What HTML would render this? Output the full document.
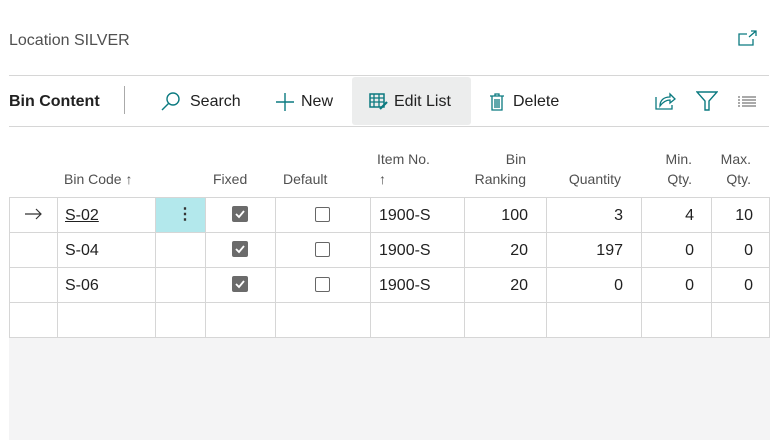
<!DOCTYPE html>
<html><head><style>
*{margin:0;padding:0;box-sizing:border-box}
body{width:780px;height:440px;background:#fff;font-family:"Liberation Sans",sans-serif;color:#212121;position:relative;overflow:hidden}
.a{position:absolute;white-space:nowrap}
.hl{position:absolute;height:1px;background:#d6d6d6}
.vl{position:absolute;width:1px;background:#d6d6d6}
.h{color:#505050;font-size:14px}
.c{font-size:16px}
.cb{position:absolute;width:15px;height:15px;border-radius:2px}
</style></head><body>
<div class="a" style="left:9px;top:32px;font-size:16px;color:#505050">Location SILVER</div>
<svg class="a" style="left:738px;top:30px" width="20" height="17" viewBox="0 0 20 17" fill="none" stroke="#0b7a80" stroke-width="1.3"><path d="M9 4H1v11h14V9"/><path d="M11 7l7-6M13 1h5v5"/></svg>
<div class="hl" style="left:9px;top:75px;width:760px"></div>
<div class="a" style="left:9px;top:93px;font-size:16px;font-weight:bold">Bin Content</div>
<div class="vl" style="left:124px;top:86px;height:28px;background:#aaa"></div>
<svg class="a" style="left:160px;top:91px" width="22" height="20" viewBox="0 0 22 20" fill="none" stroke="#0b7a80" stroke-width="1.4"><circle cx="13" cy="8" r="6"/><path d="M9 12L2 19"/></svg>
<div class="a" style="left:190px;top:93px;font-size:16px">Search</div>
<svg class="a" style="left:275px;top:92px" width="20" height="20" viewBox="0 0 20 20" stroke="#0b7a80" stroke-width="1.4"><path d="M10 1v18M1 10h18"/></svg>
<div class="a" style="left:301px;top:93px;font-size:16px">New</div>
<div class="a" style="left:352px;top:77px;width:119px;height:48px;background:#eceded;border-radius:3px"></div>
<svg class="a" style="left:369px;top:93px" width="20" height="18" viewBox="0 0 20 18"><rect x="1" y="1" width="14" height="13" fill="none" stroke="#0b7a80" stroke-width="1.5"/><path d="M1 5h14M1 9h14M5 1v13M10 1v13" stroke="#0b7a80" stroke-width="1.3"/><path d="M11 16l7-7" stroke="#0b7a80" stroke-width="2.2"/></svg>
<div class="a" style="left:394px;top:93px;font-size:16px">Edit List</div>
<svg class="a" style="left:489px;top:92px" width="16" height="20" viewBox="0 0 16 20" fill="none" stroke="#0b7a80" stroke-width="1.3"><path d="M1 4h14M6 4V2h4v2M3 4v14h10V4M6 7v9M8 7v9M10 7v9"/></svg>
<div class="a" style="left:513px;top:93px;font-size:16px">Delete</div>
<svg class="a" style="left:655px;top:91px" width="22" height="20" viewBox="0 0 22 20" fill="none" stroke="#0b7a80" stroke-width="1.3"><path d="M1 6v12h16v-4"/><path d="M5 15c0-6 4-9 10-9V3l5 5-5 4V9c-4 0-7 2-10 6z"/></svg>
<svg class="a" style="left:696px;top:91px" width="22" height="20" viewBox="0 0 22 20" fill="none" stroke="#0b7a80" stroke-width="1.4"><path d="M1 1h20l-8 9v9h-4v-9z"/></svg>
<svg class="a" style="left:738px;top:96px" width="18" height="12" viewBox="0 0 18 12" stroke="#555" stroke-width="1"><path d="M0 1h2M4 1h14M0 4h2M4 4h14M0 7h2M4 7h14M0 10h2M4 10h14"/></svg>
<div class="hl" style="left:9px;top:126px;width:760px"></div>

<div class="a h" style="left:64px;top:171px">Bin Code ↑</div>
<div class="a h" style="left:213px;top:171px">Fixed</div>
<div class="a h" style="left:283px;top:171px">Default</div>
<div class="a h" style="left:377px;top:151px">Item No.</div>
<div class="a h" style="left:379px;top:171px">↑</div>
<div class="a h" style="left:464px;top:151px;width:62px;text-align:right">Bin</div>
<div class="a h" style="left:464px;top:171px;width:62px;text-align:right">Ranking</div>
<div class="a h" style="left:546px;top:171px;width:75px;text-align:right">Quantity</div>
<div class="a h" style="left:641px;top:151px;width:51px;text-align:right">Min.</div>
<div class="a h" style="left:641px;top:171px;width:51px;text-align:right">Qty.</div>
<div class="a h" style="left:711px;top:151px;width:40px;text-align:right">Max.</div>
<div class="a h" style="left:711px;top:171px;width:40px;text-align:right">Qty.</div>

<div class="a" style="left:9px;top:337px;width:761px;height:103px;background:#f4f4f5"></div>
<div class="a" style="left:156px;top:198px;width:49px;height:34px;background:#b3e8ec"></div>
<div class="a" style="left:177px;top:204px;font-size:16px;font-weight:bold;color:#333">⋮</div>

<div class="hl" style="left:9px;top:197px;width:761px"></div>
<div class="hl" style="left:9px;top:232px;width:761px"></div>
<div class="hl" style="left:9px;top:267px;width:761px"></div>
<div class="hl" style="left:9px;top:302px;width:761px"></div>
<div class="hl" style="left:9px;top:337px;width:761px"></div>
<div class="vl" style="left:9px;top:197px;height:141px"></div>
<div class="vl" style="left:57px;top:197px;height:141px"></div>
<div class="vl" style="left:155px;top:197px;height:141px"></div>
<div class="vl" style="left:205px;top:197px;height:141px"></div>
<div class="vl" style="left:275px;top:197px;height:141px"></div>
<div class="vl" style="left:370px;top:197px;height:141px"></div>
<div class="vl" style="left:464px;top:197px;height:141px"></div>
<div class="vl" style="left:546px;top:197px;height:141px"></div>
<div class="vl" style="left:641px;top:197px;height:141px"></div>
<div class="vl" style="left:711px;top:197px;height:141px"></div>
<div class="vl" style="left:769px;top:197px;height:141px"></div>

<svg class="a" style="left:25px;top:208px" width="17" height="12" viewBox="0 0 17 12" fill="none" stroke="#333" stroke-width="1.2"><path d="M0 6h16M11 1l5 5-5 5"/></svg>
<div class="a c" style="left:65px;top:207px;text-decoration:underline">S-02</div>
<div class="a c" style="left:65px;top:242px">S-04</div>
<div class="a c" style="left:65px;top:277px">S-06</div>

<svg class="a" style="left:232px;top:206px" width="16" height="16"><rect width="16" height="16" rx="2" fill="#6b6b6b"/><path d="M4 8l3 3 5-6" stroke="#fff" stroke-width="1.8" fill="none"/></svg>
<svg class="a" style="left:232px;top:241px" width="16" height="16"><rect width="16" height="16" rx="2" fill="#6b6b6b"/><path d="M4 8l3 3 5-6" stroke="#fff" stroke-width="1.8" fill="none"/></svg>
<svg class="a" style="left:232px;top:276px" width="16" height="16"><rect width="16" height="16" rx="2" fill="#6b6b6b"/><path d="M4 8l3 3 5-6" stroke="#fff" stroke-width="1.8" fill="none"/></svg>
<div class="cb" style="left:315px;top:207px;border:1px solid #666"></div>
<div class="cb" style="left:315px;top:242px;border:1px solid #666"></div>
<div class="cb" style="left:315px;top:277px;border:1px solid #666"></div>

<div class="a c" style="left:379px;top:207px">1900-S</div>
<div class="a c" style="left:379px;top:242px">1900-S</div>
<div class="a c" style="left:379px;top:277px">1900-S</div>

<div class="a c" style="left:464px;top:207px;width:64px;text-align:right">100</div>
<div class="a c" style="left:464px;top:242px;width:64px;text-align:right">20</div>
<div class="a c" style="left:464px;top:277px;width:64px;text-align:right">20</div>
<div class="a c" style="left:546px;top:207px;width:77px;text-align:right">3</div>
<div class="a c" style="left:546px;top:242px;width:77px;text-align:right">197</div>
<div class="a c" style="left:546px;top:277px;width:77px;text-align:right">0</div>
<div class="a c" style="left:641px;top:207px;width:53px;text-align:right">4</div>
<div class="a c" style="left:641px;top:242px;width:53px;text-align:right">0</div>
<div class="a c" style="left:641px;top:277px;width:53px;text-align:right">0</div>
<div class="a c" style="left:711px;top:207px;width:42px;text-align:right">10</div>
<div class="a c" style="left:711px;top:242px;width:42px;text-align:right">0</div>
<div class="a c" style="left:711px;top:277px;width:42px;text-align:right">0</div>
</body></html>
